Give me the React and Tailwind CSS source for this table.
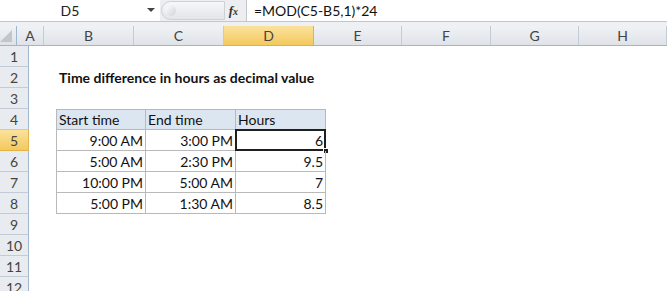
import React from "react";

const font = "font-['Lato','Open_Sans',sans-serif]";

// sheet columns after the row heading
const columns = [
  { key: "A", w: "w-[27px]" },
  { key: "B", w: "w-[90px]" },
  { key: "C", w: "w-[90px]" },
  { key: "D", w: "w-[90px]" },
  { key: "E", w: "w-[88px]" },
  { key: "F", w: "w-[89px]" },
  { key: "G", w: "w-[88px]" },
  { key: "H", w: "w-[88px]" },
];

const table = [
  ["Start time", "End time", "Hours"],
  ["9:00 AM", "3:00 PM", "6"],
  ["5:00 AM", "2:30 PM", "9.5"],
  ["10:00 PM", "5:00 AM", "7"],
  ["5:00 PM", "1:30 AM", "8.5"],
];

const FormulaBar = () => (
  <div className="flex h-[22px] border-b border-[#c6c6c6] bg-white">
    <div className="relative flex w-[160px] items-center justify-center text-[14px] text-[#222]">
      <span className="mr-[20px]">D5</span>
      <span className="absolute right-[5px] top-[8px] h-0 w-0 border-x-[4px] border-t-[4px] border-x-transparent border-t-[#444]" />
    </div>
    <div className="flex w-[86px] items-center bg-[#eceef1]">
      <div className="ml-[1px] h-[19px] w-[64px] rounded-l-full border border-[#cdd0d5] bg-gradient-to-b from-[#f6f7f8] to-[#e3e5e9]">
        <div className="ml-[3px] mt-[3px] h-[11px] w-[11px] rounded-full bg-gradient-to-br from-white to-[#cfd3d8]" />
      </div>
      <span className="ml-auto mr-[8px] font-['Liberation_Serif',serif] text-[13px] font-bold italic text-[#333]">
        f<span className="text-[10px]">x</span>
      </span>
    </div>
    <div className="flex flex-1 items-center border-l border-[#c6c6c6] pl-[7px] text-[14px] text-[#111]">
      =MOD(C5-B5,1)*24
    </div>
  </div>
);

const ColumnHeaders = () => (
  <div className="flex h-[20px] border-b border-[#9eb6ce] bg-gradient-to-b from-[#f0f2f5] to-[#dfe3e8] text-[14px] text-[#444]">
    <div className="relative w-[29px] border-r border-[#9eb6ce]">
      <span className="absolute bottom-[3px] right-[4px] h-0 w-0 border-b-[12px] border-l-[12px] border-b-[#c2c6cc] border-l-transparent" />
    </div>
    {columns.map((c) => (
      <div
        key={c.key}
        className={`${c.w} flex shrink-0 items-center justify-center border-r ${
          c.key === "D"
            ? "border-[#e2b34a] bg-gradient-to-b from-[#fae29c] to-[#f4c95c]"
            : "border-[#c3cbd6]"
        }`}
      >
        {c.key}
      </div>
    ))}
  </div>
);

const Cell = ({ w, children, className = "" }) => (
  <div className={`${w} flex shrink-0 items-center overflow-visible whitespace-nowrap ${className}`}>
    {children}
  </div>
);

const SheetRow = ({ n }) => {
  const active = n === 5;
  const tIndex = n - 4;
  const inTable = tIndex >= 0 && tIndex < table.length;
  const head = n === 4;

  return (
    <div className="flex h-[21px] text-[14px] text-[#111]">
      <div
        className={`flex w-[29px] shrink-0 items-center justify-center border-b border-r ${
          active
            ? "border-b-[#e2b34a] border-r-[#e2b34a] bg-gradient-to-b from-[#fae29c] to-[#f4c95c]"
            : "border-b-[#c3cbd6] border-r-[#9eb6ce] bg-[#e8ebef]"
        } text-[#444]`}
      >
        {n}
      </div>
      {columns.map((c, i) => {
        const tCol = i - 1;
        if (n === 2 && c.key === "B") {
          return (
            <Cell key={c.key} w={c.w} className="pl-[3px] font-bold">
              Time difference in hours as decimal value
            </Cell>
          );
        }
        if (inTable && tCol >= 0 && tCol < 3) {
          const text = table[tIndex][tCol];
          const selected = active && c.key === "D";
          return (
            <Cell
              key={c.key}
              w={c.w}
              className={`relative border-b border-r border-[#b9b9b9] ${
                tCol === 0 ? "border-l" : ""
              } ${head ? "border-t bg-[#dce6f1] pl-[2px]" : "justify-end pr-[2px]"}`}
            >
              {text}
              {selected && (
                <>
                  <span className="pointer-events-none absolute -left-[1px] -top-[1px] h-[22px] w-[91px] border-2 border-[#1f1f1f]" />
                  <span className="absolute -bottom-[4px] -right-[4px] h-[6px] w-[6px] border border-white bg-[#1f1f1f]" />
                </>
              )}
            </Cell>
          );
        }
        return <Cell key={c.key} w={c.w} />;
      })}
    </div>
  );
};

export default function App() {
  return (
    <div className={`h-[291px] w-[667px] overflow-hidden bg-white ${font}`}>
      <FormulaBar />
      <div className="h-[4px] bg-[#eef0f3]" />
      <ColumnHeaders />
      {Array.from({ length: 12 }, (_, i) => (
        <SheetRow key={i} n={i + 1} />
      ))}
    </div>
  );
}
